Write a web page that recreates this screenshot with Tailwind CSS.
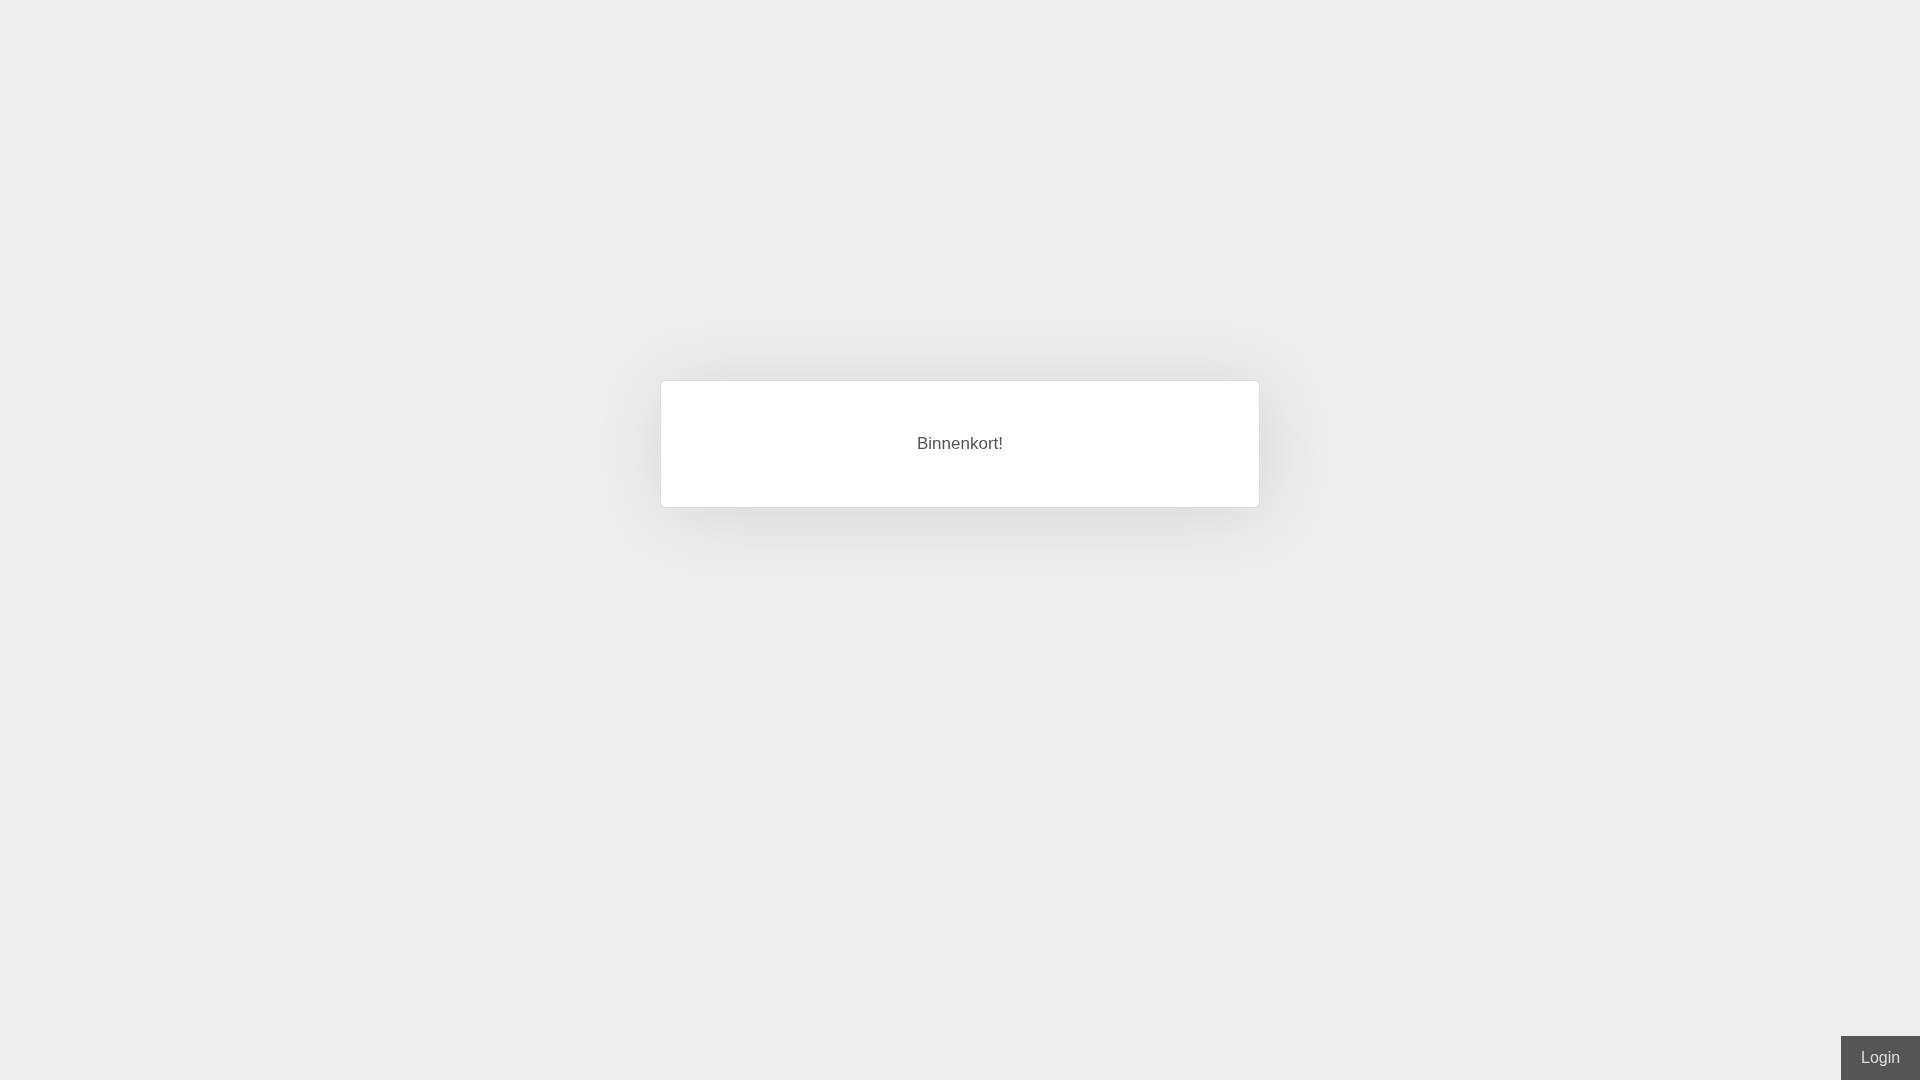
<!DOCTYPE html>
<html lang="nl">
<head>
  <meta charset="UTF-8">
  <meta name="viewport" content="width=device-width, initial-scale=1.0">
  <title>Binnenkort!</title>
  <script src="https://cdn.jsdelivr.net/npm/@tailwindcss/browser@4"></script>
</head>
<body class="min-h-screen flex flex-col bg-[#eeeeee] font-['Liberation_Sans',Arial,sans-serif] antialiased">
  <main class="flex-1 flex flex-col items-center px-4 pt-[380px]">
    <div class="w-full max-w-[600px] rounded-md border border-[#dddddd] bg-white p-[50px] text-center shadow-[5px_5px_75px_rgba(0,0,0,0.1)] will-change-transform">
      <p class="text-[17px] leading-[26px] text-[#555555]">Binnenkort!</p>
    </div>
  </main>
  <footer class="flex justify-end">
    <a href="#" class="bg-[#555555] px-5 py-[10px] text-base leading-6 text-[#dddddd] will-change-transform">Login</a>
  </footer>
</body>
</html>
